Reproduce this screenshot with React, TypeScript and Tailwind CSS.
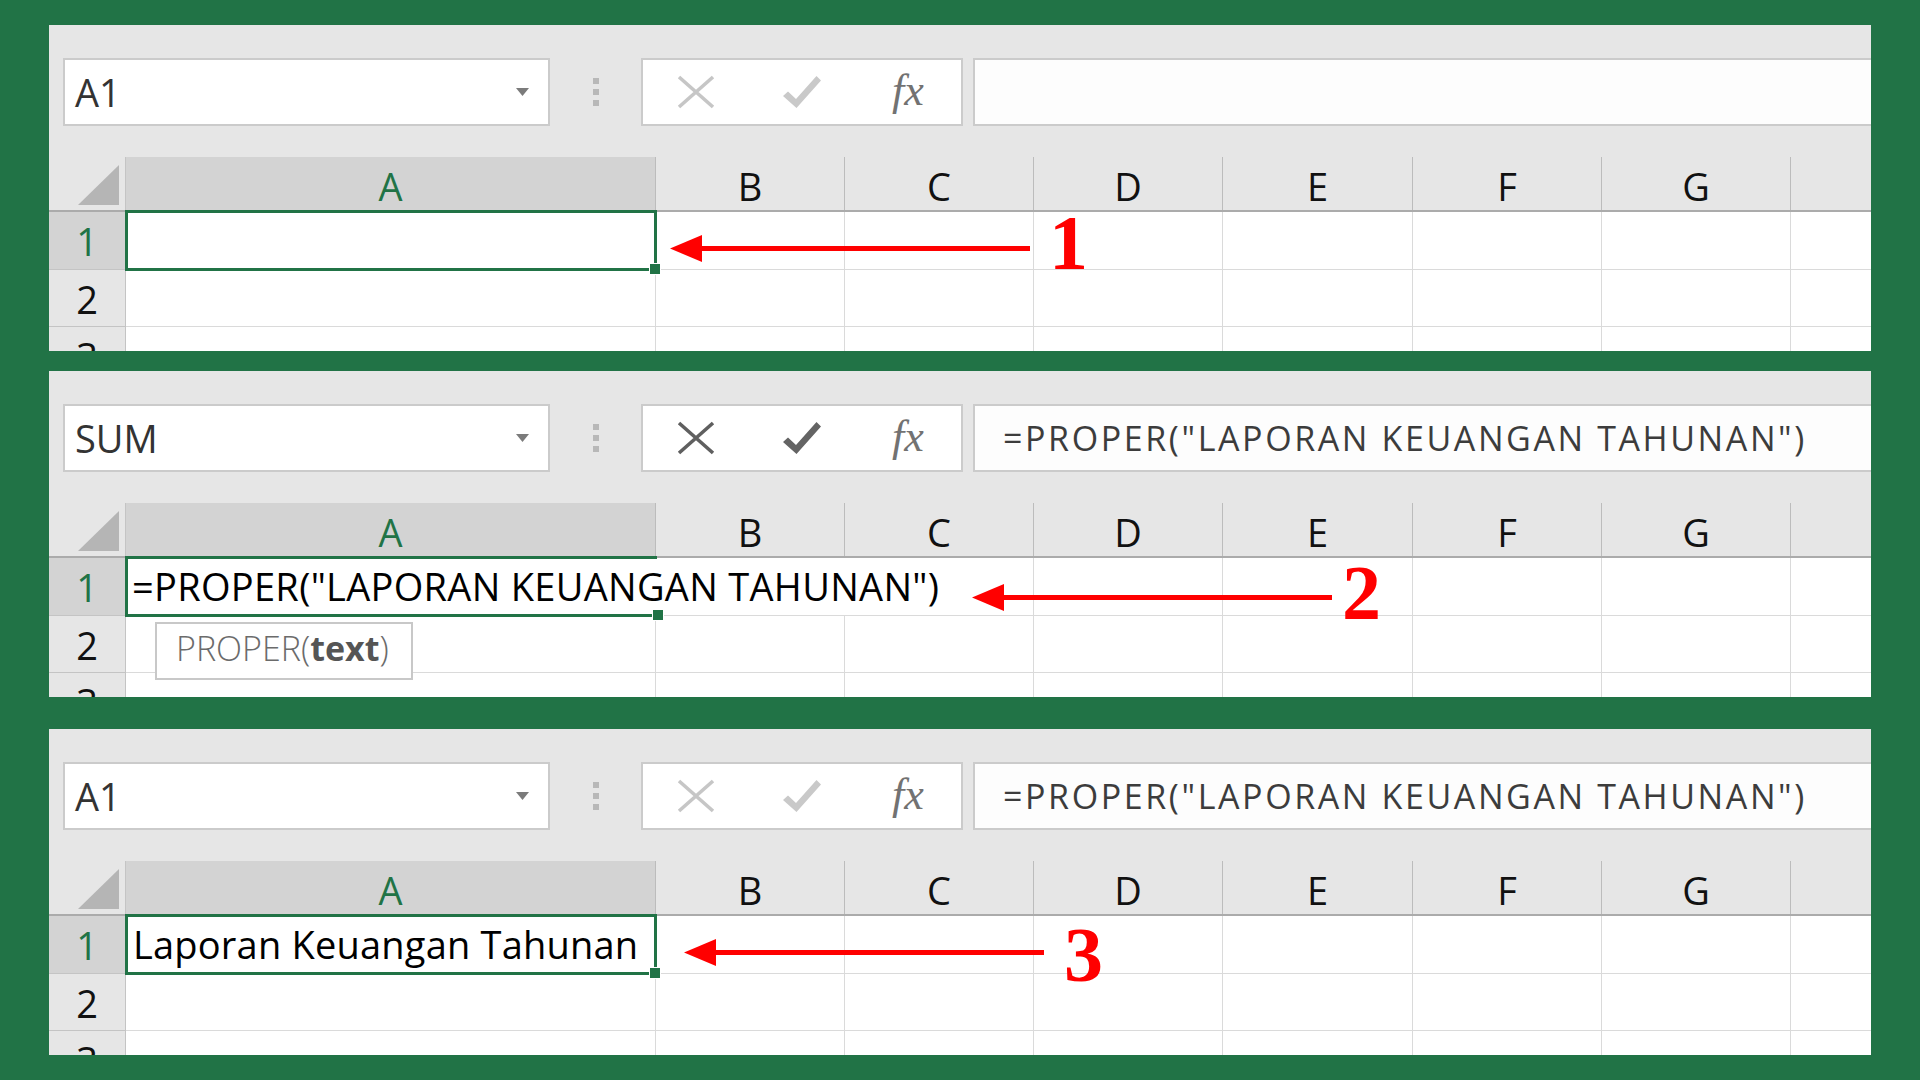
import React from "react";

const colW = ["w-[189px]", "w-[189px]", "w-[189px]", "w-[190px]", "w-[189px]", "w-[189px]"];
const letters = ["B", "C", "D", "E", "F", "G"];

function XMark({ active }: { active: boolean }) {
  const c = active ? "#5f5f5f" : "#c6c6c6";
  return (
    <svg width="38" height="34" viewBox="0 0 38 34">
      <path d="M2 2L36 32M36 2L2 32" stroke={c} strokeWidth="3.6" fill="none" />
    </svg>
  );
}

function CheckMark({ active }: { active: boolean }) {
  const c = active ? "#646464" : "#c9c9c9";
  return (
    <svg width="40" height="34" viewBox="0 0 40 34">
      <path d="M1 21L6 16.5L14 24L34.5 1L39 5.5L14.5 33Z" fill={c} />
    </svg>
  );
}

type PanelProps = {
  name: string;
  active: boolean;
  formula?: string;
  mode: "empty" | "edit" | "value";
  cellText?: string;
  num: string;
  arrowClass: string;
  numClass: string;
  className?: string;
};

function Panel({ name, active, formula, mode, cellText, num, arrowClass, numClass, className }: PanelProps) {
  return (
    <div className={`relative h-[326px] w-[1822px] overflow-hidden bg-[#e6e6e6] ${className ?? ""}`}>
      {/* name box + formula bar */}
      <div className="mt-[33px] flex h-[68px]">
        <div className="ml-[14px] flex w-[487px] items-center justify-between border-2 border-[#cbcbcb] bg-white pl-[10px] pr-[19px]">
          <span className="text-[38px] leading-none text-[#333333]">{name}</span>
          <svg width="13" height="8" viewBox="0 0 13 8">
            <path d="M0 0H13L6.5 8Z" fill="#7b7b7b" />
          </svg>
        </div>
        <div className="flex w-[91px] flex-col items-center justify-center gap-[5px]">
          <div className="h-[6px] w-[6px] bg-[#b8b8b8]" />
          <div className="h-[6px] w-[6px] bg-[#b8b8b8]" />
          <div className="h-[6px] w-[6px] bg-[#b8b8b8]" />
        </div>
        <div className="flex w-[322px] border-2 border-[#cbcbcb] bg-white">
          <div className="flex flex-1 items-center justify-center">
            <XMark active={active} />
          </div>
          <div className="flex flex-1 items-center justify-center">
            <CheckMark active={active} />
          </div>
          <div className="flex flex-1 items-center justify-center pb-[2px] font-['Liberation_Serif',serif] text-[44px] italic leading-none text-[#727272]">
            fx
          </div>
        </div>
        <div className="ml-[10px] flex flex-1 items-center border-y-2 border-l-2 border-[#cbcbcb] bg-[#fdfdfd] pl-[28px] text-[34px] tracking-[2.6px] text-[#3c3c3c] whitespace-nowrap">
          {formula}
        </div>
      </div>

      {/* column headers */}
      <div className="mt-[31px] flex h-[55px] border-b-2 border-[#ababab]">
        <div className="flex w-[77px] items-end justify-end border-r border-[#c4c4c4] pb-[5px] pr-[6px]">
          <svg width="41" height="40" viewBox="0 0 41 40">
            <path d="M41 0V40H0Z" fill="#b5b5b5" />
          </svg>
        </div>
        <div className="flex w-[530px] items-center justify-center border-r border-[#bcbcbc] bg-[#d3d3d3] pt-[5px] text-[38px] text-[#217346]">
          A
        </div>
        {letters.map((l, i) => (
          <div
            key={l}
            className={`flex ${colW[i]} items-center justify-center border-r border-[#bcbcbc] pt-[5px] text-[38px] text-[#111111]`}
          >
            {l}
          </div>
        ))}
        <div className="flex-1" />
      </div>

      {/* rows */}
      <div className="relative">
        {[1, 2, 3].map((r) => (
          <div key={r} className={`flex ${r === 1 ? "h-[58px]" : "h-[57px]"}`}>
            <div
              className={`flex w-[77px] items-center justify-center border-r border-b border-[#c4c4c4] pt-[2px] text-[38px] ${
                r === 1 ? "bg-[#d3d3d3] text-[#217346]" : "bg-[#e6e6e6] text-[#111111]"
              }`}
            >
              {r}
            </div>
            <div className="relative w-[530px] border-r border-b border-[#dadada] bg-white">
              {r === 1 && mode === "value" && (
                <div className="flex h-full items-center pl-[7px] text-[38px] tracking-[0.2px] text-black whitespace-nowrap">
                  {cellText}
                </div>
              )}
              {r === 1 && mode === "edit" && (
                <div className="absolute top-0 left-0 z-10 flex h-[57px] items-center bg-white pr-[10px] pl-[6px] text-[38px] tracking-[0.3px] text-black whitespace-nowrap">
                  {cellText}
                </div>
              )}
            </div>
            {letters.map((l, i) => (
              <div key={l} className={`${colW[i]} border-r border-b border-[#dadada] bg-white`} />
            ))}
            <div className="flex-1 border-b border-[#dadada] bg-white" />
          </div>
        ))}

        {/* selection */}
        <div
          className={`absolute top-[-2px] left-[76px] z-20 h-[61px] w-[532px] border-[#217346] ${
            mode === "edit" ? "border-y-[3px] border-l-[3px]" : "border-[3px]"
          }`}
        >
          <div className="absolute -right-[7px] -bottom-[7px] h-[12px] w-[12px] border border-white bg-[#217346]" />
        </div>
      </div>

      {mode === "edit" && (
        <div className="absolute top-[251px] left-[106px] z-30 flex h-[58px] w-[258px] items-center border-2 border-[#c8c8c8] bg-white pb-[5px] pl-[19px] text-[34px] whitespace-nowrap">
          <span className="font-light text-[#6b6b6b]">PROPER(</span>
          <span className="font-bold text-[#555555]">text</span>
          <span className="font-light text-[#6b6b6b]">)</span>
        </div>
      )}

      {/* annotation */}
      <svg className={`absolute z-30 ${arrowClass}`} width="360" height="27" viewBox="0 0 360 27">
        <path d="M0 13.5L32 0V27Z" fill="#ff0000" />
        <rect x="30" y="11" width="330" height="5" fill="#ff0000" />
      </svg>
      <div className={`absolute z-30 font-['Liberation_Serif',serif] text-[78px] font-bold leading-none text-[#ff0000] ${numClass}`}>
        {num}
      </div>
    </div>
  );
}

export default function App() {
  const formula = '=PROPER("LAPORAN KEUANGAN TAHUNAN")';
  return (
    <div className="flex h-[1080px] w-[1920px] flex-col bg-[#217346] pt-[25px] pl-[49px] font-['Open_Sans',sans-serif]">
      <Panel
        name="A1"
        active={false}
        mode="empty"
        num="1"
        arrowClass="left-[621px] top-[210px]"
        numClass="left-[1000px] top-[179px]"
      />
      <Panel
        className="mt-[20px]"
        name="SUM"
        active={true}
        formula={formula}
        mode="edit"
        cellText={formula}
        num="2"
        arrowClass="left-[923px] top-[213px]"
        numClass="left-[1293px] top-[183px]"
      />
      <Panel
        className="mt-[32px]"
        name="A1"
        active={false}
        formula={formula}
        mode="value"
        cellText="Laporan Keuangan Tahunan"
        num="3"
        arrowClass="left-[635px] top-[210px]"
        numClass="left-[1015px] top-[187px]"
      />
    </div>
  );
}
